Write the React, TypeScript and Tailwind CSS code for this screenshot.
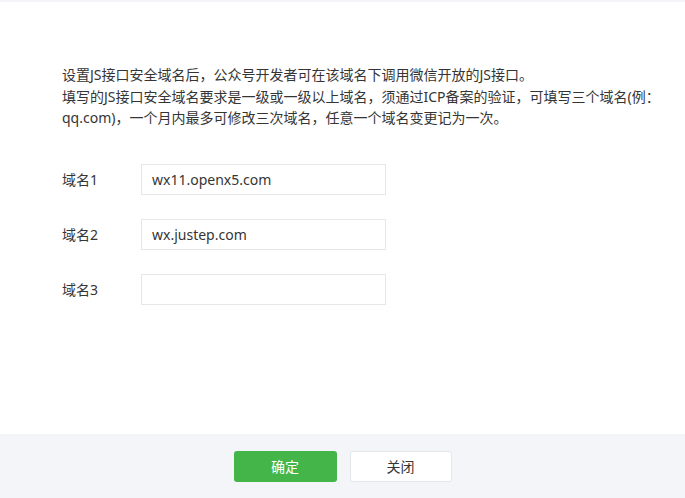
import { useState } from "react";

const font = { fontFamily: '"Noto Sans", "Noto Sans CJK SC", sans-serif' };

const fields = [
  { label: "域名1", value: "wx11.openx5.com" },
  { label: "域名2", value: "wx.justep.com" },
  { label: "域名3", value: "" },
];

export default function App() {
  const [domains, setDomains] = useState(fields.map((f) => f.value));

  return (
    <div
      className="w-[685px] h-[498px] flex flex-col bg-white text-[#353535]"
      style={font}
    >
      <div className="h-[2px] bg-[#f4f5f9]" />

      <div className="flex-1 pl-[62px] pt-[62px]">
        <div className="text-[14px] leading-[21.5px]">
          <p>设置JS接口安全域名后，公众号开发者可在该域名下调用微信开放的JS接口。</p>
          <p>
            填写的JS接口安全域名要求是一级或一级以上域名，须通过ICP备案的验证，可填写三个域名(例：
          </p>
          <p>qq.com)，一个月内最多可修改三次域名，任意一个域名变更记为一次。</p>
        </div>

        <div className="mt-[35px] flex flex-col gap-[24px]">
          {fields.map((f, i) => (
            <div key={f.label} className="flex items-center">
              <label className="w-[79px] text-[14px]">{f.label}</label>
              <input
                type="text"
                value={domains[i]}
                onChange={(e) =>
                  setDomains(domains.map((d, j) => (j === i ? e.target.value : d)))
                }
                className="w-[245px] h-[31px] border border-[#e7e7eb] px-[10px] text-[14px] text-[#353535] outline-none"
                style={font}
              />
            </div>
          ))}
        </div>
      </div>

      <div className="h-[64px] bg-[#f4f5f9] flex items-center justify-center gap-[13px]">
        <button className="w-[103px] h-[31px] rounded-[3px] bg-[#44b549] text-white text-[14px]">
          确定
        </button>
        <button className="w-[102px] h-[31px] rounded-[3px] bg-white border border-[#e4e8eb] text-[14px] text-[#353535]">
          关闭
        </button>
      </div>
    </div>
  );
}
